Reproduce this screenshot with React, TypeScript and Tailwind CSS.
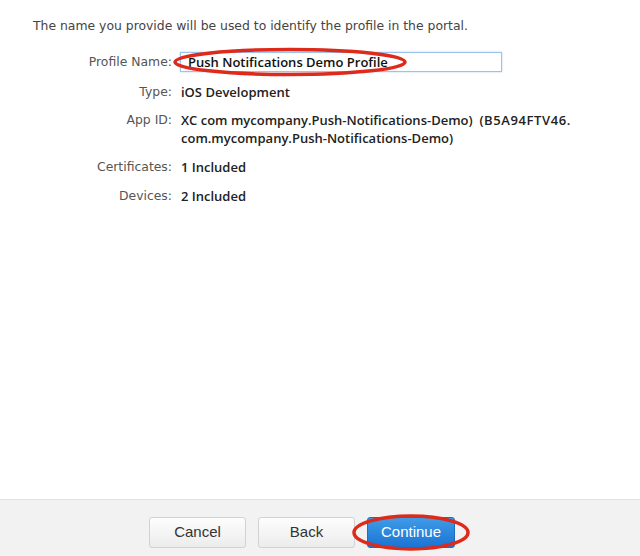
import React from "react";

const valueFont = { fontFamily: '"Open Sans", "DejaVu Sans", sans-serif' };

const Row = ({ label, children, className = "" }: { label: string; children: React.ReactNode; className?: string }) => (
  <div className={`flex ${className}`}>
    <div className="w-[172px] shrink-0 text-right text-[#555]">{label}</div>
    <div className="pl-[9px] font-semibold text-[13px] text-[#222]" style={valueFont}>{children}</div>
  </div>
);

export default function App() {
  return (
    <div className="w-[640px] h-[556px] bg-white flex flex-col overflow-hidden" style={{ fontFamily: '"DejaVu Sans", "Open Sans", sans-serif' }}>
      <div className="flex-1 flex flex-col text-[12.4px] leading-[18px]">
        <p className="pl-[33px] pt-[17px] text-[#444]">The name you provide will be used to identify the profile in the portal.</p>
        <div className="flex items-center mt-[17px]">
          <div className="w-[172px] shrink-0 text-right text-[#555]">Profile Name:</div>
          <div className="relative ml-[8px] w-[322px] h-[20px] border border-[#9cc2ee] flex items-center pl-[7px] font-semibold text-[13px] text-[#111] shadow-[0_0_2px_#b7d4f5]" style={valueFont}>
            Push Notifications Demo Profile
            <svg className="absolute left-[-9px] top-[-6px] overflow-visible" width="236" height="30" viewBox="0 0 236 30">
              <ellipse cx="118" cy="15" rx="115" ry="12.5" fill="none" stroke="#dd2a1b" strokeWidth="3.5" />
            </svg>
          </div>
        </div>
        <Row label="Type:" className="mt-[11px]">iOS Development</Row>
        <Row label="App ID:" className="mt-[10px]">
          <span className="whitespace-pre">XC com mycompany.Push-Notifications-Demo)  <span className="tracking-[0.6px]">(B5A94FTV46.</span></span>
          <br />
          com.mycompany.Push-Notifications-Demo)
        </Row>
        <Row label="Certificates:" className="mt-[11px]">1 Included</Row>
        <Row label="Devices:" className="mt-[11px]">2 Included</Row>
      </div>
      <div className="h-[57px] shrink-0 border-t border-[#e2e2e2] bg-[#f2f2f2] flex justify-center items-start pt-[17px] gap-[12px] pr-[36px]" style={{ fontFamily: '"Liberation Sans", Arial, sans-serif' }}>
        <button className="w-[97px] h-[31px] rounded-[3px] border border-[#d2d2d2] bg-gradient-to-b from-[#fdfdfd] to-[#ececec] text-[15px] text-[#333]">Cancel</button>
        <button className="w-[97px] h-[31px] rounded-[3px] border border-[#d2d2d2] bg-gradient-to-b from-[#fdfdfd] to-[#ececec] text-[15px] text-[#333]">Back</button>
        <div className="relative">
          <button className="w-[88px] h-[31px] rounded-[3px] border border-[#1a6cc4] bg-gradient-to-b from-[#3f9be6] to-[#1b74d3] text-[15px] text-white">Continue</button>
          <svg className="absolute left-[-15px] top-[-3px] overflow-visible" width="118" height="37" viewBox="0 0 118 37">
            <ellipse cx="59" cy="18.5" rx="57" ry="16.5" fill="none" stroke="#dd2a1b" strokeWidth="3.5" />
          </svg>
        </div>
      </div>
    </div>
  );
}
